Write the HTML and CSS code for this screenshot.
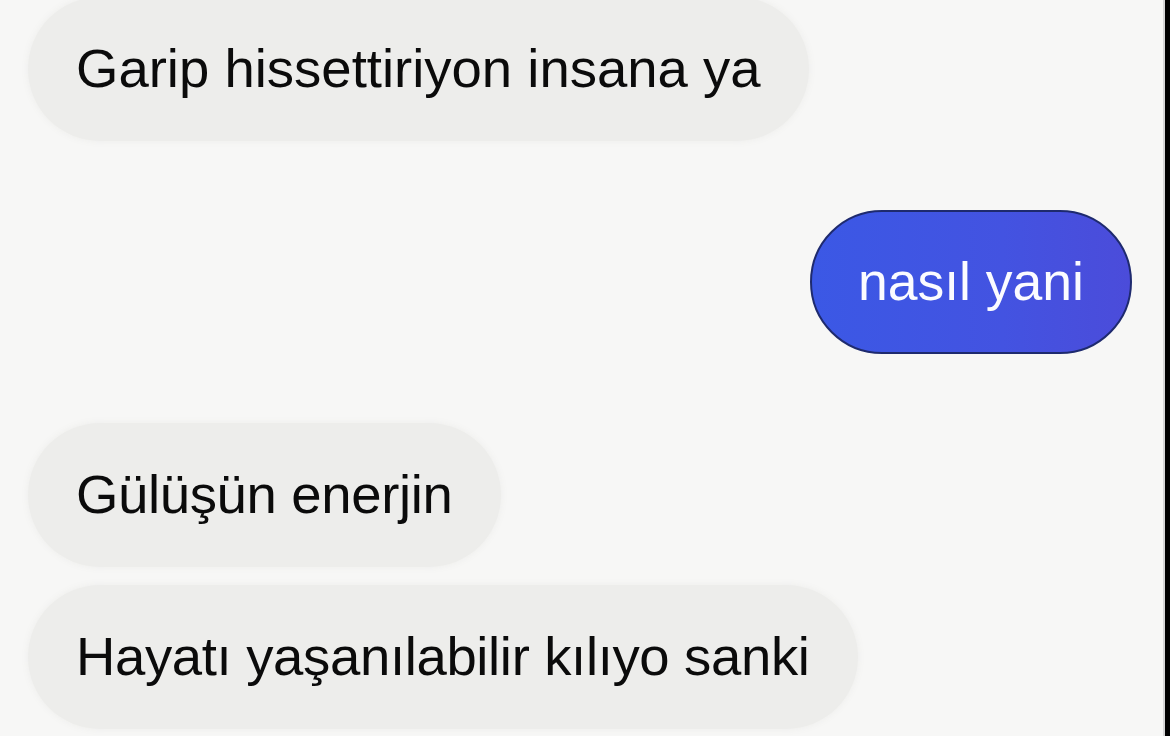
FILE: index.html
```html
<!DOCTYPE html>
<html lang="tr">
<head>
<meta charset="utf-8">
<title>Sohbet</title>
<link rel="stylesheet" href="styles.css">
</head>
<body>
<div class="screen">
  <div class="thread">
    <div class="row in first"><div class="bubble grey">Garip hissettiriyon insana ya</div></div>
    <div class="row out"><div class="bubble blue">nasıl yani</div></div>
    <div class="row in"><div class="bubble grey tight">Gülüşün enerjin</div></div>
    <div class="row in grouped"><div class="bubble grey tight">Hayatı yaşanılabilir kılıyo sanki</div></div>
  </div>
</div>
</body>
</html>
```

FILE: styles.css
```css
html, body {
  margin: 0;
  padding: 0;
  background: #000;
}
.screen {
  box-sizing: border-box;
  width: 1165px;
  height: 736px;
  background: #f7f7f6;
  border-right: 2px solid #d6d6d6;
  overflow: hidden;
}
.thread {
  display: flex;
  flex-direction: column;
  padding: 0 31px 0 28px;
  margin-top: -3px;
}
.row {
  display: flex;
  margin-top: 69px;
}
.row.first { margin-top: 0; }
.row.grouped { margin-top: 18px; }
.row.in { justify-content: flex-start; }
.row.out { justify-content: flex-end; }
.bubble {
  box-sizing: border-box;
  height: 144px;
  padding: 0 48px;
  border-radius: 72px;
  display: flex;
  align-items: center;
  font-family: "Liberation Sans", Arial, sans-serif;
  font-size: 54.5px;
  line-height: 62px;
  white-space: nowrap;
}
.bubble.grey {
  background: #ededeb;
  color: #0b0b0b;
  box-shadow: 0 0 6px 1px #efefed;
}
.bubble.tight {
  letter-spacing: -0.35px;
}
.bubble.blue {
  background: linear-gradient(90deg, #3b58e5 0%, #4353e1 60%, #4b4cda 100%);
  border: 2px solid #1e2a6e;
  color: #fbfbff;
  padding: 0 46px 0 46px;
  font-size: 53.5px;
}
```
